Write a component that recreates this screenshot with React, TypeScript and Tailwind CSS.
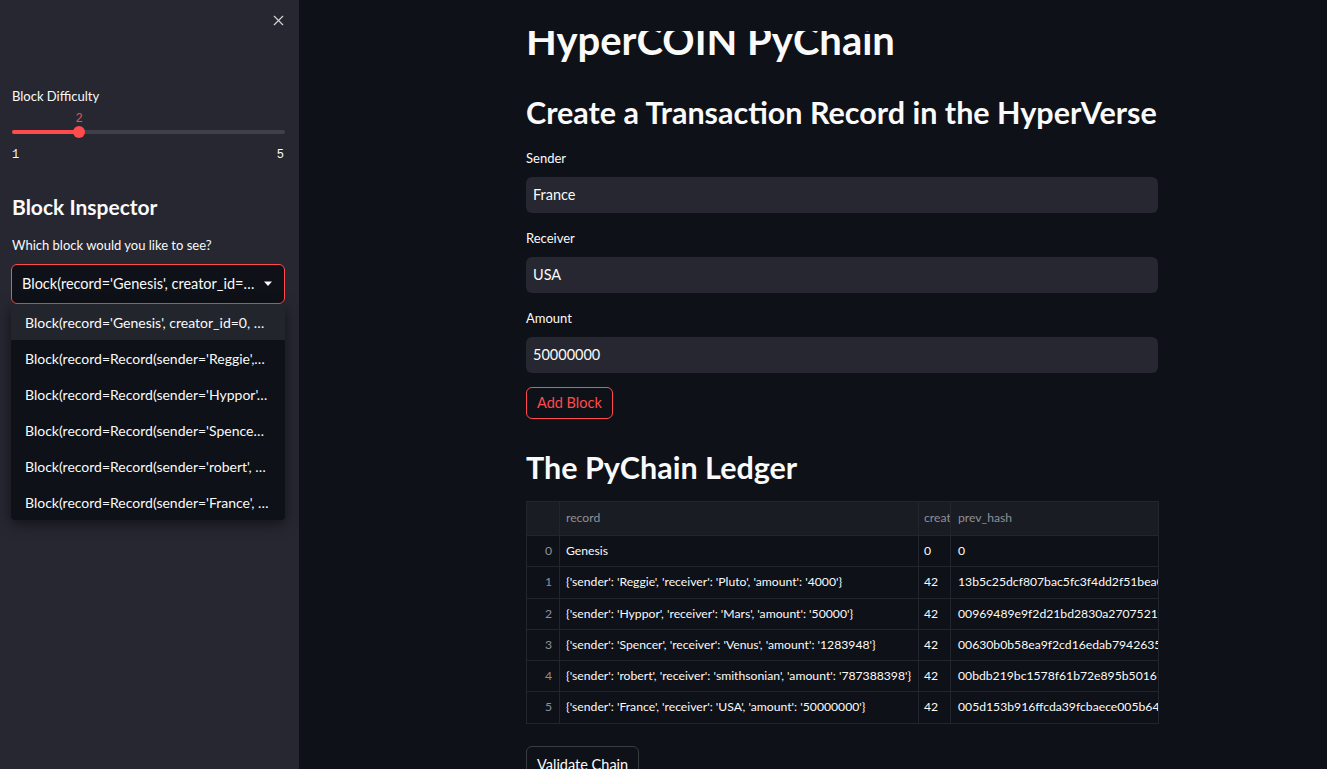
import { X } from 'lucide-react';

const font = { fontFamily: 'Lato, "Noto Sans", sans-serif' };

const options = [
  "Block(record='Genesis', creator_id=0, …",
  "Block(record=Record(sender='Reggie',…",
  "Block(record=Record(sender='Hyppor'…",
  "Block(record=Record(sender='Spence…",
  "Block(record=Record(sender='robert', …",
  "Block(record=Record(sender='France', …",
];

const rows = [
  { record: 'Genesis', creator: '0', hash: '0' },
  { record: "{'sender': 'Reggie', 'receiver': 'Pluto', 'amount': '4000'}", creator: '42', hash: '13b5c25dcf807bac5fc3f4dd2f51bea025' },
  { record: "{'sender': 'Hyppor', 'receiver': 'Mars', 'amount': '50000'}", creator: '42', hash: '00969489e9f2d21bd2830a2707521fb70c' },
  { record: "{'sender': 'Spencer', 'receiver': 'Venus', 'amount': '1283948'}", creator: '42', hash: '00630b0b58ea9f2cd16edab7942635ef0a' },
  { record: "{'sender': 'robert', 'receiver': 'smithsonian', 'amount': '787388398'}", creator: '42', hash: '00bdb219bc1578f61b72e895b50161a6e' },
  { record: "{'sender': 'France', 'receiver': 'USA', 'amount': '50000000'}", creator: '42', hash: '005d153b916ffcda39fcbaece005b64ac2' },
];

const Sidebar = () => (
  <aside className="flex w-[299px] shrink-0 flex-col bg-[#262730] px-[12px] text-[#fafafa]">
    <div className="flex h-[29px] items-end justify-end">
      <X size={17} strokeWidth={1.6} className="text-[#d6d6d9]" />
    </div>

    <div className="mt-[59px] text-[13px] leading-[16px]">Block Difficulty</div>
    <div className="relative mt-[8px] h-[28px]">
      <div className="absolute left-[67px] top-0 w-[0px] text-center font-['Liberation_Mono',monospace] text-[12px] leading-[14px] text-[#ff4b4b]">
        <span className="absolute -translate-x-1/2">2</span>
      </div>
      <div className="absolute left-0 right-[2px] top-[18px] h-[4px] rounded-full bg-[#3f414a]" />
      <div className="absolute left-0 top-[18px] h-[4px] w-[67px] rounded-l-full bg-[#ff4b4b]" />
      <div className="absolute left-[61px] top-[14px] h-[12px] w-[12px] rounded-full bg-[#ff4b4b]" />
    </div>
    <div className="mt-[8px] flex justify-between pr-[3px] font-['Liberation_Mono',monospace] text-[12px] leading-[14px]">
      <span>1</span>
      <span>5</span>
    </div>

    <h2 className="mt-[32px] text-[21px] font-bold leading-[26px]">Block Inspector</h2>
    <div className="mt-[17px] text-[13px] leading-[16px]">Which block would you like to see?</div>

    <div className="mt-[11px] w-[274px] -ml-[1px]">
      <div className="flex h-[40px] items-center justify-between rounded-[6px] border border-[#ff4b4b] bg-[#0e1117] pl-[10px] pr-[10px]">
        <span className="text-[14.5px]">Block(record='Genesis', creator_id=…</span>
        <svg width="10" height="6" viewBox="0 0 10 6" className="mr-[1px]">
          <path d="M1 0.5h8L5 5z" fill="#fafafa" />
        </svg>
      </div>
      <div className="overflow-hidden rounded-b-[4px] bg-[#0e1117] shadow-[0_4px_14px_rgba(0,0,0,0.5)]">
        {options.map((o, i) => (
          <div
            key={o}
            className={`flex h-[36px] items-center pl-[14px] text-[14px] ${i === 0 ? 'bg-[#23252d]' : ''}`}
          >
            {o}
          </div>
        ))}
      </div>
    </div>
  </aside>
);

const Field = ({ label, value }: { label: string; value: string }) => (
  <div>
    <div className="text-[13px] leading-[16px]">{label}</div>
    <div className="mt-[11px] flex h-[36px] items-center rounded-[6px] bg-[#262730] px-[7px] text-[14.5px]">
      {value}
    </div>
  </div>
);

const Ledger = () => (
  <div className="w-[633px] overflow-hidden border border-[#23252c] text-[12.2px]">
    <div className="flex h-[33px] items-center bg-[#1a1c23] text-[#8e9097]">
      <div className="h-full w-[33px] border-r border-[#23252c]" />
      <div className="flex h-full w-[359px] items-center border-r border-[#23252c] pl-[6px]">record</div>
      <div className="flex h-full w-[32px] items-center overflow-hidden whitespace-nowrap border-r border-[#23252c] pl-[5px]">creator_id</div>
      <div className="flex h-full flex-1 items-center pl-[7px]">prev_hash</div>
    </div>
    {rows.map((r, i) => (
      <div key={i} className="flex h-[31.3px] items-center border-t border-[#23252c]">
        <div className="flex h-full w-[33px] items-center justify-end border-r border-[#23252c] pr-[7px] text-[#8e9097]">{i}</div>
        <div className="flex h-full w-[359px] items-center overflow-hidden whitespace-nowrap border-r border-[#23252c] pl-[6px]">{r.record}</div>
        <div className="flex h-full w-[32px] items-center border-r border-[#23252c] pl-[5px]">{r.creator}</div>
        <div className="flex h-full flex-1 items-center overflow-hidden whitespace-nowrap pl-[7px]">{r.hash}</div>
      </div>
    ))}
  </div>
);

export default function App() {
  return (
    <div className="flex h-[769px] w-[1327px] overflow-hidden bg-[#0e1117] text-[#fafafa]" style={font}>
      <Sidebar />
      <main className="relative flex-1 pl-[227px]">
        <div className="absolute inset-x-0 top-0 h-[31px] bg-[#0e1117]" />
        <div className="w-[632px]">
          <h1 className="mt-[10px] text-[40px] font-bold leading-[60px]">HyperCOIN PyChain</h1>
          <h2 className="mt-[22px] text-[30.5px] font-bold leading-[40px]">Create a Transaction Record in the HyperVerse</h2>
          <div className="mt-[18px] flex flex-col gap-[17px]">
            <Field label="Sender" value="France" />
            <Field label="Receiver" value="USA" />
            <Field label="Amount" value="50000000" />
          </div>
          <button className="mt-[14px] h-[32px] rounded-[6px] border border-[#ff4b4b] px-[10px] text-[14.5px] text-[#ff4b4b]">
            Add Block
          </button>
          <h2 className="mt-[28px] text-[30.5px] font-bold leading-[40px]">The PyChain Ledger</h2>
          <div className="mt-[14px]">
            <Ledger />
          </div>
          <button className="mt-[22px] h-[38px] rounded-[6px] border border-[#3a3c44] px-[10px] text-[14.5px] text-[#fafafa]">
            Validate Chain
          </button>
        </div>
      </main>
    </div>
  );
}
